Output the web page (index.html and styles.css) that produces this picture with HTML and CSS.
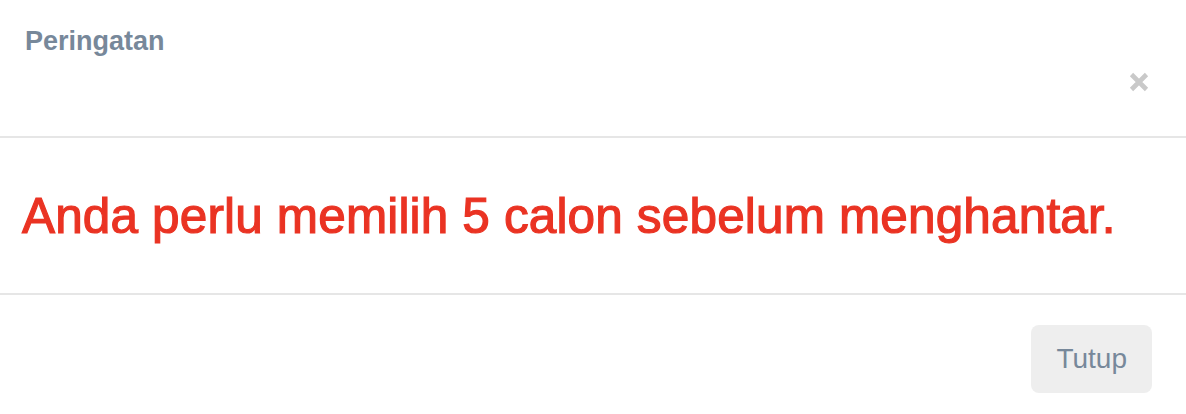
FILE: index.html
```html
<!DOCTYPE html>
<html lang="ms">
<head>
  <meta charset="UTF-8">
  <meta name="viewport" content="width=device-width, initial-scale=1.0">
  <title>Peringatan</title>
  <link rel="stylesheet" href="styles.css">
</head>
<body>
  <div class="modal">
    <div class="modal-header">
      <h4 class="modal-title">Peringatan</h4>
      <button class="close-btn" aria-label="Tutup">
        <svg width="20" height="20" viewBox="0 0 20 20">
          <path d="M2.5 2.5 L17.5 17.5 M17.5 2.5 L2.5 17.5" stroke="#c9c9c9" stroke-width="4.6" stroke-linecap="butt" fill="none"/>
        </svg>
      </button>
    </div>
    <div class="modal-body">
      <p class="warning">Anda perlu memilih 5 calon sebelum menghantar.</p>
    </div>
    <div class="modal-footer">
      <button class="btn-close-modal">Tutup</button>
    </div>
  </div>
</body>
</html>
```

FILE: styles.css
```css
/* Warning modal */
body {
  margin: 0;
  padding: 0;
  background-color: #ffffff;
  font-family: "Liberation Sans", Arial, sans-serif;
}
.modal {
  width: 1186px;
}
.modal-header {
  box-sizing: border-box;
  height: 138px;
  padding: 23px 37px 0 25px;
  display: flex;
  justify-content: space-between;
  align-items: flex-start;
  border-bottom: 2px solid #e6e6e6;
}
.modal-title {
  margin: 0;
  font-size: 27px;
  line-height: 36px;
  font-weight: bold;
  color: #77889a;
}
.close-btn {
  margin-top: 49px;
  padding: 0;
  border: none;
  background: none;
  width: 20px;
  height: 20px;
  cursor: pointer;
}
.close-btn svg {
  display: block;
}
.modal-body {
  box-sizing: border-box;
  height: 157px;
  padding: 0 22px;
  display: flex;
  align-items: center;
  border-bottom: 2px solid #e6e6e6;
}
.warning {
  margin: 0;
  font-size: 49.5px;
  line-height: 60px;
  letter-spacing: 0.15px;
  color: #ea3323;
  -webkit-text-stroke: 1.2px #ea3323;
}
.modal-footer {
  padding: 30px 34px 0 0;
  display: flex;
  justify-content: flex-end;
}
.btn-close-modal {
  height: 68px;
  padding: 0 25px;
  border: none;
  border-radius: 8px;
  background-color: #eeeeee;
  color: #77889a;
  font-family: "Liberation Sans", Arial, sans-serif;
  font-size: 28px;
  cursor: pointer;
}
```
